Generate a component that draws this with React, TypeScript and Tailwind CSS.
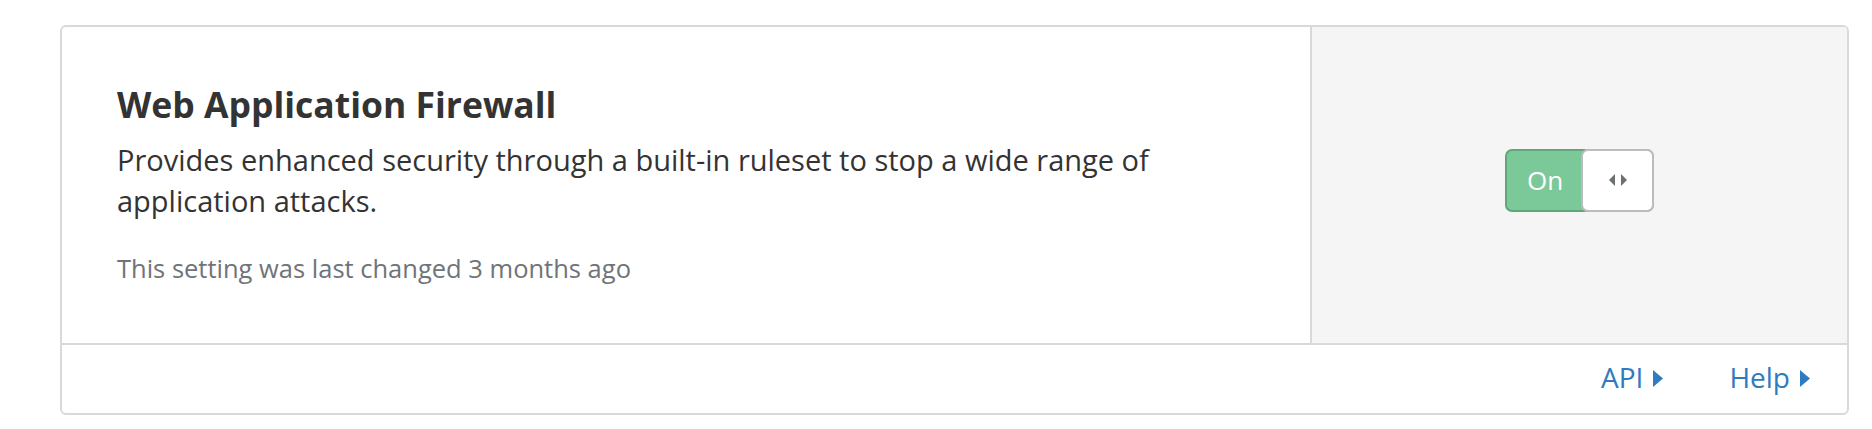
import { useState } from "react";

function Caret() {
  return (
    <svg width="10" height="17" viewBox="0 0 10 17" className="ml-[10px] mt-[3px]">
      <path d="M0 0 L10 8.5 L0 17 Z" fill="currentColor" />
    </svg>
  );
}

function Toggle({ on, onChange }: { on: boolean; onChange: () => void }) {
  return (
    <button
      onClick={onChange}
      className="flex h-[63px] w-[149px] overflow-hidden rounded-[7px] bg-[#7bc899]"
    >
      <span className="flex h-full w-[80px] items-center justify-center rounded-l-[7px] border-2 border-r-0 border-[#62a67c] pr-[2px] text-[26px] text-white">
        {on ? "On" : "Off"}
      </span>
      <span className="-ml-[4px] flex h-full flex-1 items-center justify-center gap-[6px] rounded-[7px] border-2 border-[#b9bdbf] bg-white">
        {/* arrows */}
        <svg width="6" height="12" viewBox="0 0 6 12">
          <path d="M6 0 L0 6 L6 12 Z" fill="#6b7073" />
        </svg>
        <svg width="6" height="12" viewBox="0 0 6 12">
          <path d="M0 0 L6 6 L0 12 Z" fill="#6b7073" />
        </svg>
      </span>
    </button>
  );
}

export default function App() {
  const [on, setOn] = useState(true);

  return (
    <div className="min-h-screen bg-white pl-[60px] pr-[23px] pt-[25px] font-['Open_Sans',sans-serif]">
      <div className="overflow-hidden rounded-[6px] border-2 border-[#d9d9d9]">
        {/* 본문 */}
        <div className="flex h-[318px] border-b-2 border-[#d9d9d9]">
          <div className="flex-1 border-r-2 border-[#d9d9d9] pl-[55px] pr-[55px] pt-[55px]">
            <h2 className="text-[35.5px] font-bold leading-[44px] text-[#333333]">
              Web Application Firewall
            </h2>
            <p className="mt-[13px] max-w-[1080px] text-[29px] leading-[41px] text-[#333333]">
              Provides enhanced security through a built-in ruleset to stop a wide range of application attacks.
            </p>
            <p className="mt-[30px] text-[25.5px] leading-[34px] text-[#707478]">
              This setting was last changed 3 months ago
            </p>
          </div>
          <div className="flex w-[535px] items-center justify-center bg-[#f5f5f5] pb-[10px]">
            <Toggle on={on} onChange={() => setOn(!on)} />
          </div>
        </div>

        {/* 하단 링크 */}
        <div className="flex h-[68px] items-center justify-end gap-[66px] pb-[4px] pr-[37px] text-[28px] text-[#2f7bbf]">
          <a href="#" className="flex items-center">
            API
            <Caret />
          </a>
          <a href="#" className="flex items-center">
            Help
            <Caret />
          </a>
        </div>
      </div>
    </div>
  );
}
